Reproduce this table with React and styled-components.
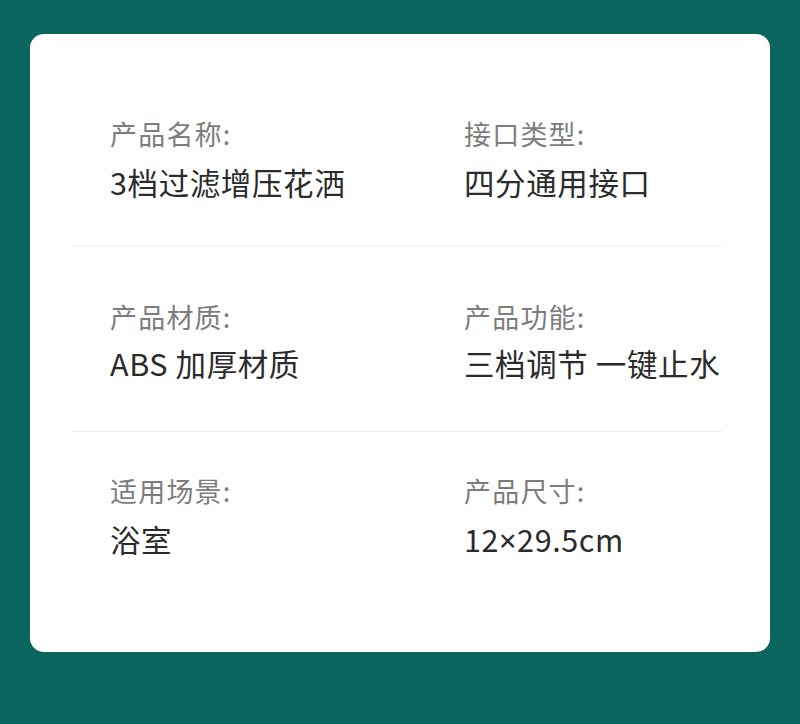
import styled, { createGlobalStyle } from "styled-components";

const GlobalStyle = createGlobalStyle`
    html, body {
        margin: 0;
        padding: 0;
        background-color: #0b665f;
    }
    body {
        font-family: "Noto Sans CJK SC", "Noto Sans", sans-serif;
    }
`;

const Page = styled.div`
    width: 800px;
    height: 724px;
    padding: 34px 30px 0 30px;
    box-sizing: border-box;
    background-color: #0b665f;
`;

const Card = styled.div`
    width: 740px;
    height: 618px;
    box-sizing: border-box;
    background-color: #ffffff;
    border-radius: 14px;
    padding: 0 48px 0 42px;
    display: flex;
    flex-direction: column;
`;

const Row = styled.div`
    display: grid;
    grid-template-columns: 354px 1fr;
    padding: ${(p) => p.$pt}px 0 ${(p) => p.$pb}px 38px;
    border-bottom: ${(p) => (p.$last ? "none" : "1px solid #eeeeee")};
`;

const Item = styled.div`
    display: flex;
    flex-direction: column;
    gap: ${(p) => p.$gap}px;
`;

const Label = styled.div`
    font-size: 27px;
    line-height: 36px;
    letter-spacing: 1.2px;
    color: #7d7d7d;
    white-space: nowrap;
`;

const Value = styled.div`
    font-size: 30.5px;
    line-height: 40px;
    letter-spacing: 0.6px;
    color: #2b2b2b;
    white-space: nowrap;
`;

// the CJK font draws × full-width; the reference has the narrow Latin sign
const Times = styled.span`
    font-family: "Noto Sans", sans-serif;
`;

const ROWS = [
    {
        pt: 82,
        pb: 43,
        gap: 10,
        items: [
            ["产品名称:", "3档过滤增压花洒"],
            ["接口类型:", "四分通用接口"],
        ],
    },
    {
        pt: 53,
        pb: 48,
        gap: 8,
        items: [
            ["产品材质:", "ABS 加厚材质"],
            ["产品功能:", "三档调节 一键止水"],
        ],
    },
    {
        pt: 41,
        pb: 0,
        gap: 10,
        items: [
            ["适用场景:", "浴室"],
            [
                "产品尺寸:",
                <>
                    12<Times>×</Times>29.5cm
                </>,
            ],
        ],
    },
];

const App = () => {
    return (
        <>
            <GlobalStyle />
            <Page>
                <Card>
                    {ROWS.map((row, i) => (
                        <Row
                            key={i}
                            $pt={row.pt}
                            $pb={row.pb}
                            $last={i === ROWS.length - 1}
                        >
                            {row.items.map(([label, value]) => (
                                <Item key={label} $gap={row.gap}>
                                    <Label>{label}</Label>
                                    <Value>{value}</Value>
                                </Item>
                            ))}
                        </Row>
                    ))}
                </Card>
            </Page>
        </>
    );
};

export default App;
